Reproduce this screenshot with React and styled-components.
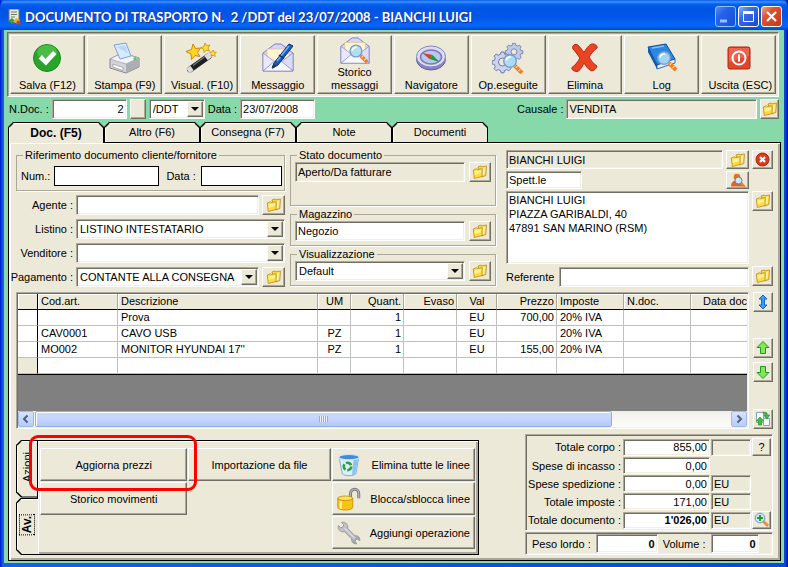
import React from "react";
import styled, { createGlobalStyle, css } from "styled-components";

const face = "#ece9d8";
const green = "#87d9a9";
const shade = "#aca899";
const dark = "#716f64";

const GlobalStyle = createGlobalStyle`
  * {
    box-sizing: border-box;
  }
  body {
    margin: 0;
    background: #0831d9;
    font-family: "Liberation Sans", Arial, sans-serif;
    font-size: 11px;
    line-height: 14px;
    color: #000;
  }
  button, input, select, textarea {
    font: inherit;
    color: inherit;
    margin: 0;
    border-radius: 0;
    outline: none;
  }
  label {
    flex: none;
    white-space: nowrap;
  }
`;

const sunken = css`
  border: 1px solid;
  border-color: ${shade} #fff #fff ${shade};
  box-shadow: inset 1px 1px 0 ${dark}, inset -1px -1px 0 #f1efe2;
`;

const raised = css`
  border: 1px solid;
  border-color: #fff ${dark} ${dark} #fff;
  box-shadow: inset -1px -1px 0 ${shade};
  background: ${face};
`;

/* ---------- window ---------- */

const AppWindow = styled.div`
  display: flex;
  flex-direction: column;
  min-height: 100vh;
  padding: 0 4px 4px;
  background: linear-gradient(90deg, #0019cf, #1660e8 3px, #0b47e0 calc(100% - 3px), #00138c);
`;

const TitleBar = styled.header`
  display: flex;
  align-items: center;
  gap: 2px;
  height: 30px;
  margin: 0 -4px;
  padding: 3px 6px 0 7px;
  border-radius: 7px 7px 0 0;
  background: linear-gradient(
    #0c5ce8 0,
    #3a92ff 2px,
    #0562ee 4px,
    #0054e3 8px,
    #0257ea 18px,
    #0566fb 25px,
    #0460f0 27px,
    #0144c8 30px
  );

  h1 {
    flex: 1;
    margin: 0 0 0 1px;
    font: bold 13px/18px Lato, "Open Sans", sans-serif;
    color: #fff;
    text-shadow: 1px 1px 0 #0f2c8c;
    white-space: pre;
    overflow: hidden;
  }
`;

const WindowButton = styled.button`
  width: 21px;
  height: 21px;
  padding: 0;
  border: 1px solid #fff;
  border-radius: 3px;
  opacity: ${({ $dim }) => ($dim ? 0.6 : 1)};
  background: ${({ $close }) =>
    $close
      ? "linear-gradient(135deg, #f0a08a, #e0512c 35%, #c8371a)"
      : "linear-gradient(135deg, #8fb0fb, #3a6cea 35%, #1c47cc)"};

  svg {
    display: block;
  }
`;

const WindowBody = styled.main`
  display: flex;
  flex: 1;
  flex-direction: column;
  padding: 2px 3px;
  background: ${green};
`;

/* ---------- toolbar ---------- */

const Toolbar = styled.nav`
  display: grid;
  grid-template-columns: repeat(10, 1fr);
  gap: 2px;
  margin-right: 2px;
  padding: 2px;
  border: 1px solid;
  border-color: ${dark} #fff #fff ${dark};
  box-shadow: inset 1px 1px 0 ${shade};
  background: ${face};
`;

const ToolButton = styled.button`
  ${raised}
  display: flex;
  flex-direction: column;
  align-items: center;
  justify-content: space-between;
  height: 59px;
  padding: ${({ $tall }) => ($tall ? "0 0 1px" : "6px 0 1px")};
  line-height: 13px;

  svg {
    flex: none;
  }
  span {
    max-width: 60px;
    margin-top: ${({ $tall }) => ($tall ? "-4px" : "0")};
    white-space: ${({ $tall }) => ($tall ? "normal" : "nowrap")};
  }
`;

/* ---------- controls ---------- */

const Input = styled.input`
  ${sunken}
  flex: ${({ $w }) => ($w ? "none" : "1")};
  min-width: 0;
  width: ${({ $w }) => ($w ? $w + "px" : "100%")};
  height: ${({ $h }) => ($h || 20) + "px"};
  padding: 0 2px;
  background: ${({ readOnly }) => (readOnly ? face : "#fff")};
  text-align: ${({ $right }) => ($right ? "right" : "left")};
  font-weight: ${({ $bold }) => ($bold ? "bold" : "normal")};
`;

const FlatInput = styled(Input)`
  border: 1px solid #000;
  box-shadow: none;
`;

const Area = styled.textarea`
  ${sunken}
  grid-column: 1 / 3;
  height: 73px;
  padding: 1px 2px;
  background: #fff;
  resize: none;
  display: block;
`;

const Combo = styled.div`
  position: relative;
  min-width: 0;
  width: ${({ $w }) => ($w ? $w + "px" : "100%")};

  select {
    ${sunken}
    display: block;
    width: 100%;
    height: 20px;
    padding: 0 18px 0 3px;
    appearance: none;
    background: #fff;
  }
  span {
    ${raised}
    position: absolute;
    top: 2px;
    right: 2px;
    bottom: 2px;
    display: flex;
    align-items: center;
    justify-content: center;
    width: 16px;
    pointer-events: none;
  }
  span::after {
    content: "";
    border: 4px solid transparent;
    border-top-color: #000;
    border-bottom: 0;
  }
`;

const IconButton = styled.button`
  ${raised}
  flex: none;
  display: flex;
  align-items: center;
  justify-content: center;
  width: ${({ $w }) => ($w || 22) + "px"};
  height: ${({ $h }) => ($h || 20) + "px"};
  padding: 0;
`;

const Select = ({ id, label, value, w }) => (
  <Combo $w={w}>
    <select id={id} aria-label={label} defaultValue={value}>
      <option>{value}</option>
    </select>
    <span />
  </Combo>
);

/* ---------- document bar and tabs ---------- */

const DocBar = styled.div`
  display: flex;
  align-items: center;
  gap: 3px;
  height: 25px;
  padding: 0 2px 2px;

  .causale {
    display: flex;
    align-items: center;
    gap: 3px;
    flex: 0 1 262px;
    margin-left: auto;
  }
`;

const chamfer = "polygon(0 100%, 0 5px, 5px 0, calc(100% - 5px) 0, 100% 5px, 100% 100%)";

const TabList = styled.div`
  display: flex;
  align-items: flex-end;
  margin: 0 0 -1px 1px;
  z-index: 1;
`;

const Tab = styled.button`
  position: relative;
  width: 96px;
  height: ${({ $on }) => ($on ? 21 : 20)}px;
  margin-bottom: ${({ $on }) => ($on ? 0 : 1)}px;
  padding: 0;
  border: 0;
  background: #000;
  clip-path: ${chamfer};
  font-weight: ${({ $on }) => ($on ? "bold" : "normal")};
  font-size: ${({ $on }) => ($on ? 12 : 11)}px;

  &::before {
    content: "";
    position: absolute;
    inset: 1px 1px 0;
    background: ${face};
    clip-path: ${chamfer};
    box-shadow: inset 1px 1px 0 #fff;
  }
  span {
    position: relative;
  }
`;

const Panel = styled.section`
  flex: 1;
  display: flex;
  flex-direction: column;
  margin: 0 0 0 1px;
  padding: 5px 7px 4px;
  border: 1px solid #000;
  background: ${face};
  box-shadow: inset 2px 1px 0 #fff, inset -2px -2px 0 ${shade};
`;

/* ---------- form ---------- */

const Form = styled.form`
  display: grid;
  grid-template-columns: 269fr 206fr 272fr;
  gap: 5px;
`;

const Group = styled.fieldset`
  min-width: 0;
  height: ${({ $h }) => $h + "px"};
  margin: 0;
  padding: 0 4px;
  border: 1px solid ${shade};
  box-shadow: 1px 1px 0 #fff;

  legend {
    margin-left: 2px;
    padding: 0 2px;
    background: ${face};
    line-height: 14px;
    font-size: 11px;
  }
`;

const Line = styled.div`
  display: flex;
  align-items: center;
  gap: ${({ $gap }) => $gap ?? 4}px;
  padding-top: ${({ $top }) => $top || 0}px;
`;

const Column = styled.div`
  display: flex;
  flex-direction: column;
  gap: ${({ $gap }) => $gap}px;
  min-width: 0;
`;

const FieldRow = styled.div`
  display: grid;
  grid-template-columns: 57px minmax(0, 1fr) ${({ $button }) => ($button ? "23px" : "")};
  gap: 3px;
  align-items: center;

  label {
    justify-self: end;
  }
`;

const Recipient = styled.div`
  display: grid;
  grid-template-columns: minmax(0, 1fr) 23px 21px;
  align-content: start;
  gap: 2px 3px;
  padding: 2px 0 0 5px;

  .referente {
    grid-column: 1 / 3;
  }
`;

/* ---------- lines grid ---------- */

const LinesArea = styled.div`
  display: flex;
  gap: 4px;
  margin-top: 5px;
`;

const GridFrame = styled.div`
  ${sunken}
  flex: 1;
  min-width: 0;
  padding: 1px;
  overflow: hidden;
`;

const GridView = styled.div`
  height: 117px;
  overflow: hidden;
  background: #808080;
`;

const Lines = styled.table`
  table-layout: fixed;
  width: 100%;
  border-collapse: separate;
  border-spacing: 0;
  border-bottom: 1px solid #000;

  th,
  td {
    height: 16px;
    padding: 0 2px 0 3px;
    border-right: 1px solid #c0c0c0;
    border-bottom: 1px solid #c0c0c0;
    background: #fff;
    font-weight: normal;
    line-height: 15px;
    white-space: nowrap;
    overflow: hidden;
    text-align: left;
  }
  tr > :first-child {
    border-right-color: #000;
  }
  tr > :last-child {
    padding-right: 0;
    border-right: 0;
  }
  thead th {
    border-bottom-color: #000;
    border-right-color: ${shade};
    background: ${face};
    box-shadow: inset 1px 1px 0 #fff;
  }
  tbody tr:last-child > :first-child {
    background: ${face};
  }
  .c {
    text-align: center;
  }
  .r {
    text-align: right;
  }
`;

const ScrollBar = styled.div`
  display: flex;
  height: 16px;
  background: linear-gradient(#f0efea, #fdfdfa);

  button {
    flex: none;
    width: 16px;
    padding: 0;
    border: 1px solid #9db8f0;
    border-radius: 2px;
    background: linear-gradient(#d7e3fe, #b8ccf8);
  }
  button svg {
    display: block;
  }
  .track {
    flex: 1;
    padding: 0 1px;
  }
`;

const Thumb = styled.div`
  width: 83%;
  height: 16px;
  border: 1px solid #8eaeea;
  border-radius: 2px;
  background: linear-gradient(#cadafd, #c3d3fd 60%, #b3c7f6);
  box-shadow: inset 1px 1px 0 #fff;
  display: flex;
  align-items: center;
  justify-content: center;

  i {
    width: 9px;
    height: 6px;
    background: repeating-linear-gradient(90deg, #8cacf0 0 1px, #eef4fe 1px 2px);
  }
`;

const SideButtons = styled.div`
  display: flex;
  flex-direction: column;

  button:nth-child(2) {
    margin-top: 26px;
  }
  button:nth-child(3) {
    margin-top: 4px;
  }
  button:nth-child(4) {
    margin-top: auto;
  }
`;

/* ---------- footer ---------- */

const Footer = styled.div`
  display: flex;
  justify-content: space-between;
  align-items: flex-start;
  margin-top: 5px;
`;

const Actions = styled.section`
  display: flex;
  flex: 0 1 463px;
  margin-top: 6px;
`;

const sideChamfer = "polygon(100% 0, 5px 0, 0 5px, 0 calc(100% - 5px), 5px 100%, 100% 100%)";

const SideTabs = styled.div`
  display: flex;
  flex-direction: column;
  width: 22px;
  margin-right: -1px;
`;

const SideTab = styled.button`
  position: relative;
  z-index: ${({ $on }) => ($on ? 1 : 0)};
  flex: 1;
  width: ${({ $on }) => ($on ? 22 : 21)}px;
  padding: 0;
  border: 0;
  background: #000;
  clip-path: ${sideChamfer};
  font-weight: ${({ $on }) => ($on ? "bold" : "normal")};
  font-size: ${({ $on }) => ($on ? 12 : 11)}px;

  &::before {
    content: "";
    position: absolute;
    inset: 1px 0 1px 1px;
    background: ${face};
    clip-path: ${sideChamfer};
    box-shadow: inset 1px 1px 0 #fff;
  }
  span {
    position: relative;
    display: inline-block;
    writing-mode: vertical-rl;
    transform: rotate(180deg);
    padding: ${({ $on }) => ($on ? "1px 0" : "0")};
    border: ${({ $on }) => ($on ? "1px dotted #000" : "0")};
  }
`;

const ActionPanel = styled.div`
  flex: 1;
  display: grid;
  grid-template-columns: 147fr 142fr 143fr;
  gap: 1px;
  height: 115px;
  padding: 7px 3px 0 2px;
  border: 1px solid #000;
  box-shadow: inset 1px 1px 0 #fff, inset -2px -2px 0 ${shade};
`;

const ActionButton = styled.button`
  ${raised}
  display: flex;
  align-items: center;
  width: 100%;
  height: 33px;
  padding: 0 4px;
  white-space: nowrap;

  svg {
    flex: none;
  }
  span {
    flex: 1;
    text-align: ${({ $end }) => ($end ? "right" : "center")};
  }
`;

const Marked = styled.div`
  position: relative;

  &::after {
    content: "";
    position: absolute;
    inset: -13px -10px -10px -11px;
    z-index: 2;
    border: 3px solid #f00;
    border-radius: 9px;
    pointer-events: none;
  }
`;

const Summary = styled.aside`
  flex: none;
  width: 248px;
`;

const Totals = styled.div`
  display: grid;
  grid-template-columns: 96px 87px 40px 19px;
  gap: 1px;
  align-items: center;
  height: 97px;
  padding: 3px 0 2px;
  border: 1px solid;
  border-color: ${shade} #fff #fff ${shade};
  box-shadow: inset 1px 1px 0 ${dark};

  label {
    justify-self: end;
    padding-right: 1px;
  }
`;

const Weights = styled.div`
  ${sunken}
  display: flex;
  align-items: center;
  gap: 5px;
  height: 23px;
  margin-top: 1px;
  padding: 0 6px;
`;

/* ---------- icons ---------- */

const Folder = () => (
  <svg width="16" height="16" viewBox="0 0 16 16">
    <path d="M6 3l3-1 1 .8 4.500-.8-.7 9.500-4 1.500z" fill="#fbd94a" stroke="#b98a20" strokeWidth=".8" />
    <path d="M8.500 4.500l4.800-.9-.6 7-2.700 1z" fill="#fff29a" />
    <path d="M1.300 6l3-1.200L6 5.500 10.300 4.500 10 12.500 2.300 14.500z" fill="#ffdc3c" stroke="#b98a20" strokeWidth=".8" />
    <path d="M2.500 7.500l6.600-1.500-.2 3-6 2z" fill="#fff29a" />
  </svg>
);

const FolderButton = ({ w, h, label }) => (
  <IconButton type="button" $w={w} $h={h} aria-label={label}>
    <Folder />
  </IconButton>
);

const Glass = ({ x = 0, y = 0 }) => (
  <g transform={`translate(${x} ${y})`}>
    <path d="M12 12l7 7" stroke="#f57c1f" strokeWidth="4" />
    <path d="M13 14l1.500-2M15.500 17l2-2" stroke="#fde0b8" strokeWidth="1.200" />
    <circle cx="7" cy="7" r="6.300" fill="#a9ddf8" fillOpacity=".92" stroke="#7d9cc4" strokeWidth="1.400" />
    <path d="M3 6.500C3.500 4 5.500 2.800 8 3" stroke="#fff" strokeWidth="1.600" fill="none" />
  </g>
);

const Envelope = () => (
  <>
    <path d="M1 11 13 2h6l12 9v18H1z" fill="#d5d5f6" stroke="#7e7ec2" />
    <path d="M5 7h22v14H5z" fill="#fff3d0" stroke="#d8c492" strokeWidth=".7" />
    <path d="M1 11l12 9-12 9z" fill="#e9e9fd" stroke="#8e8ecd" strokeWidth=".8" />
    <path d="M31 11l-12 9 12 9z" fill="#dcdcf8" stroke="#8e8ecd" strokeWidth=".8" />
    <path d="M1 29l13-11h4l13 11z" fill="#f7f7ff" stroke="#8e8ecd" strokeWidth=".8" />
  </>
);

const gearPath =
  "M-1.500-9h3l.6 2.300 2.200.9 2-1.200 2.100 2.100-1.200 2 .9 2.200L10.400-.1v3l-2.300.6-.9 2.200 1.200 2-2.100 2.100-2-1.200-2.200.9-.6 2.300h-3l-.6-2.300-2.200-.9-2 1.200-2.100-2.100 1.200-2-.9-2.200-2.300-.6v-3l2.300-.6.9-2.200-1.200-2 2.100-2.100 2 1.200 2.200-.9z";

const ICONS = {
  save: (
    <>
      <circle cx="16" cy="16" r="13.500" fill="#2aa52c" stroke="#178a1c" />
      <ellipse cx="16" cy="10" rx="10" ry="7" fill="#62ca5a" opacity=".6" />
      <path d="M7.500 16.500l3.500-3.500 3.500 4L22 9l3.500 3L15 23.500z" fill="#fff" />
    </>
  ),
  print: (
    <>
      <path d="M2 17l12-6 17 5v9l-13 6L2 26z" fill="#d3d3d9" stroke="#85858f" />
      <path d="M2 17l12-6 17 5-13 6z" fill="#f4f4f6" stroke="#9c9ca6" strokeWidth=".7" />
      <path d="M6 3l12-2 5 13-11 3z" fill="#d8eaff" stroke="#7ca3d8" />
      <path d="M9 5l8-1.500 3 8" fill="#a8cdf8" opacity=".7" />
      <path d="M18 22l13-6v9l-13 6z" fill="#acacb5" />
      <path d="M5 22l10 3.500v3L5 25z" fill="#fff" stroke="#888" strokeWidth=".6" />
      <circle cx="27" cy="16.500" r="1.600" fill="#4cd14c" />
    </>
  ),
  wand: (
    <>
      <path d="M5 27.500 24 14" stroke="#1d1d22" strokeWidth="6" strokeLinecap="round" />
      <path d="M8 23.500l12-9" stroke="#75757f" strokeWidth="1.300" />
      <path d="M3 29l4-2.900M21 16l6-4.500" stroke="#dcdce2" strokeWidth="5.500" />
      <path d="M8 2l2.500 4.500 5-.5-3 4.500 2.500 4-5-1-3.500 4-.5-5.500L1 9.500l5.500-2z" fill="#ffd426" stroke="#c98b00" />
      <path d="M20 1l1.500 2.500 3.500-.5-2 3 1.500 3-3.300-.8L19 10.500l-.3-3.300-3-1.500 3.200-1.200z" fill="#ffdc3a" stroke="#c98b00" strokeWidth=".8" />
      <path d="M28 8l1 2 2.500.3-1.800 1.700.5 2.500-2.200-1.200-2 1 .4-2.300-1.800-1.700 2.400-.4z" fill="#ffdc3a" stroke="#c98b00" strokeWidth=".7" />
    </>
  ),
  message: (
    <>
      <Envelope />
      <path d="M10 26l2-5L27 2l4 2-15 19z" fill="#1660c0" stroke="#0a2f74" />
      <path d="M15 19 27 4" stroke="#74b2f5" strokeWidth="1.400" />
      <path d="M10 27l1.800-5 3.200 2z" fill="#333" />
      <path d="M17 13l5 3.500" stroke="#0b2c6c" strokeWidth="1.500" />
    </>
  ),
  history: (
    <>
      <Envelope />
      <Glass x={10} y={9} />
    </>
  ),
  compass: (
    <>
      <ellipse cx="16" cy="17.500" rx="14.500" ry="10.500" fill="#8583c0" stroke="#67659f" />
      <ellipse cx="16" cy="14.500" rx="14.500" ry="10.500" fill="#dcdcf4" stroke="#8886bf" />
      <ellipse cx="16" cy="15" rx="10.500" ry="7" fill="#b6c9ef" stroke="#7c7ab6" strokeWidth="1.500" />
      <path d="M7.500 11l10 2-3 4z" fill="#e23b1c" />
      <path d="M24.500 20l-10-3 3-4z" fill="#1e9a3a" />
    </>
  ),
  gears: (
    <>
      <g transform="translate(22 9) scale(.85)">
        <path d={gearPath} fill="#c2c9e6" stroke="#6f7bb0" />
        <circle cy="1" r="3.500" fill={face} stroke="#6f7bb0" />
      </g>
      <g transform="translate(10.500 19)">
        <path d={gearPath} fill="#ccd3ee" stroke="#6f7bb0" />
        <circle cy="1" r="4" fill={face} stroke="#6f7bb0" />
      </g>
      <Glass x={11} y={12} />
    </>
  ),
  cross: (
    <path
      d="M6 2.500c3-1 5 3 9 8 3-5 6-9 9-8.500 2 0 5 2 4 4-3 2-6 6-8 9 3 5 5 7 8 9-1 4-5 6-7 4-2-1-4-4-6-7-2 4-4 8-7 8.500-3 0-6-2-5-4 4-3 6-6 8-9.500C8 12 6 9 4 7c-1-2 0-4 2-4.500z"
      fill="#ea4423"
      stroke="#b52410"
    />
  ),
  log: (
    <>
      <path d="M2 5l18-3 9 15-18 6z" fill="#2b86e0" stroke="#0e4a9c" />
      <path d="M2 5v5l9 17v-4z" fill="#0f56b0" />
      <path d="M11 23v4l18-6v-4z" fill="#e8eefa" stroke="#0e4a9c" strokeWidth=".8" />
      <path d="M6 6l12-2" stroke="#7fc0ff" strokeWidth="1.500" />
      <Glass x={11} y={9} />
    </>
  ),
  exit: (
    <>
      <rect x="5" y="5" width="22" height="22" rx="2" fill="#e2452a" stroke="#a62813" />
      <path d="M6 6h20v8L6 20z" fill="#f08069" opacity=".55" />
      <circle cx="16" cy="16" r="6.500" fill="none" stroke="#fff" strokeWidth="2" />
      <path d="M16 12.500v7" stroke="#fff" strokeWidth="2" />
    </>
  ),
  bin: (
    <>
      <path d="M3 6l4 22c4 3 14 3 18 0l4-22z" fill="#dcedfc" stroke="#5b98dc" />
      <path d="M22 8h6l-4 20-4 1.500z" fill="#8fc0f2" />
      <ellipse cx="16" cy="5.500" rx="13.500" ry="3.500" fill="#3f8ae0" stroke="#cfe4fa" strokeWidth="1.500" />
      <circle cx="14" cy="18" r="5" fill="none" stroke="#2ca23a" strokeWidth="3.500" strokeDasharray="8 2.400" />
    </>
  ),
  lock: (
    <>
      <path d="M18 14V9c0-8 11-8 11 0v6" fill="none" stroke="#77777c" strokeWidth="4" />
      <path d="M18 14V9c0-8 11-8 11 0v6" fill="none" stroke="#b8b8bd" strokeWidth="1.500" />
      <path d="M1 15v12c0 5 20 5 20 0V15z" fill="#f6c414" stroke="#b98700" />
      <path d="M5 19v10" stroke="#fff09a" strokeWidth="3" />
      <ellipse cx="11" cy="15" rx="10" ry="3" fill="#fbe062" stroke="#b98700" />
    </>
  ),
  wrench: (
    <>
      <path d="M9 9l15 15" stroke="#8b8b92" strokeWidth="7" />
      <circle cx="8" cy="8" r="6.500" fill="#c2c2c8" stroke="#8b8b92" />
      <circle cx="25" cy="25" r="5.500" fill="#a9a9b0" stroke="#8b8b92" />
      <path d="M9 9l15 15" stroke="#bcbcc3" strokeWidth="5.500" />
      <path d="M10 9.500l13 13" stroke="#e2e2e6" strokeWidth="1.500" />
      <path d="M0 4 4 0l5 5-1 3-3 1zM32 28l-4 4-4-5 1-2 2-1z" fill={face} />
      <path d="M2 6l3 3 3-1 1-3-3-3M30 26l-3-2-2 1-1 2 2 3" fill="none" stroke="#8b8b92" />
    </>
  ),
};

const Icon = ({ name, size = 32 }) => (
  <svg width={size} height={size} viewBox="0 0 32 32">
    {ICONS[name]}
  </svg>
);

const ArrowIcon = ({ d, fill, stroke }) => (
  <svg width="16" height="16" viewBox="0 0 16 16">
    <path d={d} fill={fill} stroke={stroke} />
  </svg>
);

const tools = [
  { icon: "save", label: "Salva (F12)" },
  { icon: "print", label: "Stampa (F9)" },
  { icon: "wand", label: "Visual. (F10)" },
  { icon: "message", label: "Messaggio" },
  { icon: "history", label: "Storico messaggi", tall: true },
  { icon: "compass", label: "Navigatore" },
  { icon: "gears", label: "Op.eseguite" },
  { icon: "cross", label: "Elimina" },
  { icon: "log", label: "Log" },
  { icon: "exit", label: "Uscita (ESC)" },
];

const tabs = ["Doc. (F5)", "Altro (F6)", "Consegna (F7)", "Note", "Documenti"];

const columns = [
  { label: "", width: 20 },
  { label: "Cod.art.", width: 80 },
  { label: "Descrizione", width: 200 },
  { label: "UM", width: 33, align: "c" },
  { label: "Quant.", width: 53, align: "r" },
  { label: "Evaso", width: 53, align: "r" },
  { label: "Val", width: 40, align: "c" },
  { label: "Prezzo", width: 60, align: "r" },
  { label: "Imposte", width: 67 },
  { label: "N.doc.", width: 67 },
  { label: "Data doc", align: "r" },
];

const rows = [
  ["", "", "Prova", "", "1", "", "EU", "700,00", "20% IVA", "", ""],
  ["", "CAV0001", "CAVO USB", "PZ", "1", "", "EU", "", "20% IVA", "", ""],
  ["", "MO002", "MONITOR HYUNDAI 17''", "PZ", "1", "", "EU", "155,00", "20% IVA", "", ""],
  ["", "", "", "", "", "", "", "", "", "", ""],
];

const totals = [
  { id: "corpo", label: "Totale corpo :", value: "855,00", unit: "", extra: "help" },
  { id: "incasso", label: "Spese di incasso :", value: "0,00" },
  { id: "spedizione", label: "Spese spedizione :", value: "0,00", unit: "EU" },
  { id: "imposte", label: "Totale imposte :", value: "171,00", unit: "EU" },
  { id: "documento", label: "Totale documento :", value: "1'026,00", unit: "EU", bold: true, extra: "zoom" },
];

const App = () => (
  <>
    <GlobalStyle />
    <AppWindow>
      <TitleBar>
        <svg width="15" height="16" viewBox="0 0 15 16">
          <path d="M2 0h10v12H2z" fill="#e9e9e2" stroke="#77776c" />
          <path d="M4 3h6M4 5.500h6M4 8h4" stroke="#6d7a6a" strokeWidth="1.200" />
          <path d="M1 12l4-3 3 3-3 3z" fill="#3b9b3b" />
          <path d="M6 13l3-4 4 2-2 4z" fill="#e8b020" />
          <circle cx="11.500" cy="13.500" r="2" fill="#d6401c" />
        </svg>
        <h1>{"DOCUMENTO DI TRASPORTO N.  2 /DDT del 23/07/2008 - BIANCHI LUIGI"}</h1>
        <WindowButton $dim aria-label="Riduci">
          <svg width="19" height="19" viewBox="0 0 19 19">
            <path d="M4 12.500h7v3H4z" fill="#fff" />
          </svg>
        </WindowButton>
        <WindowButton aria-label="Ingrandisci">
          <svg width="19" height="19" viewBox="0 0 19 19">
            <path d="M4.500 5h10v9.500h-10z" fill="none" stroke="#fff" />
            <path d="M4 4h11v3H4z" fill="#fff" />
          </svg>
        </WindowButton>
        <WindowButton $close aria-label="Chiudi">
          <svg width="19" height="19" viewBox="0 0 19 19">
            <path d="M5 5l9 9M14 5l-9 9" stroke="#fff" strokeWidth="2.200" />
          </svg>
        </WindowButton>
      </TitleBar>

      <WindowBody>
        <Toolbar>
          {tools.map(({ icon, label, tall }) => (
            <ToolButton key={icon} $tall={tall}>
              <Icon name={icon} size={tall ? 30 : 32} />
              <span>{label}</span>
            </ToolButton>
          ))}
        </Toolbar>

        <DocBar>
          <label htmlFor="ndoc">N.Doc. :</label>
          <Input id="ndoc" $w={75} $right defaultValue="2" />
          <IconButton $w={16} aria-label="Numero successivo" />
          <Select label="Tipo documento" value="/DDT" w={56} />
          <label htmlFor="data">Data :</label>
          <Input id="data" $w={75} defaultValue="23/07/2008" />
          <div className="causale">
            <label htmlFor="causale">Causale :</label>
            <Input id="causale" readOnly value="VENDITA" />
            <FolderButton w={19} label="Scegli causale" />
          </div>
        </DocBar>

        <TabList role="tablist">
          {tabs.map((tab, i) => (
            <Tab key={tab} role="tab" aria-selected={i === 0} $on={i === 0}>
              <span>{tab}</span>
            </Tab>
          ))}
        </TabList>

        <Panel>
          <Form>
            <Column $gap={4}>
              <Group $h={43}>
                <legend>Riferimento documento cliente/fornitore</legend>
                <Line $top={4}>
                  <label htmlFor="rif-num">Num.:</label>
                  <FlatInput id="rif-num" $w={105} />
                  <Line $gap={5}>
                    <label htmlFor="rif-data">&nbsp;Data :</label>
                    <FlatInput id="rif-data" $w={81} />
                  </Line>
                </Line>
              </Group>
              <FieldRow $button>
                <label htmlFor="agente">Agente :</label>
                <Input id="agente" />
                <FolderButton w={23} label="Scegli agente" />
              </FieldRow>
              <FieldRow>
                <label htmlFor="listino">Listino :</label>
                <Select id="listino" value="LISTINO INTESTATARIO" />
              </FieldRow>
              <FieldRow>
                <label htmlFor="venditore">Venditore :</label>
                <Select id="venditore" value="" />
              </FieldRow>
              <FieldRow $button>
                <label htmlFor="pagamento">Pagamento :</label>
                <Select id="pagamento" value="CONTANTE ALLA CONSEGNA" />
                <FolderButton w={23} label="Scegli pagamento" />
              </FieldRow>
            </Column>

            <Column $gap={1}>
              <Group $h={58}>
                <legend>Stato documento</legend>
                <Line>
                  <Input readOnly aria-label="Stato documento" value="Aperto/Da fatturare" />
                  <FolderButton label="Scegli stato" />
                </Line>
              </Group>
              <Group $h={39}>
                <legend>Magazzino</legend>
                <Line>
                  <Input aria-label="Magazzino" defaultValue="Negozio" />
                  <FolderButton label="Scegli magazzino" />
                </Line>
              </Group>
              <Group $h={39}>
                <legend>Visualizzazione</legend>
                <Line>
                  <Select label="Visualizzazione" value="Default" />
                  <FolderButton label="Scegli visualizzazione" />
                </Line>
              </Group>
            </Column>

            <Recipient>
              <Input $h={19} readOnly aria-label="Intestatario" value="BIANCHI LUIGI" />
              <FolderButton w={23} h={19} label="Scegli intestatario" />
              <IconButton type="button" $w={21} $h={19} aria-label="Rimuovi intestatario">
                <svg width="15" height="15" viewBox="0 0 15 15">
                  <circle cx="7.500" cy="7.500" r="6.500" fill="#e2371f" stroke="#b01e0c" />
                  <path d="M5 5l5 5M10 5l-5 5" stroke="#fff" strokeWidth="2.200" />
                </svg>
              </IconButton>
              <Input $w={76} $h={18} aria-label="Titolo" defaultValue="Spett.le" />
              <IconButton type="button" $w={23} $h={18} aria-label="Cerca persona">
                <svg width="16" height="15" viewBox="0 0 16 15">
                  <circle cx="7" cy="4" r="3.300" fill="#e8731c" />
                  <path d="M1 13.500c0-5 3-6 6-6s7 2 7 6z" fill="#e0632c" />
                  <path d="M11 10l4 4" stroke="#f08418" strokeWidth="2.200" />
                  <circle cx="8.500" cy="7.500" r="3.500" fill="#c6eafc" stroke="#5d7fae" />
                </svg>
              </IconButton>
              <i />
              <Area
                aria-label="Indirizzo"
                defaultValue={"BIANCHI LUIGI\nPIAZZA GARIBALDI, 40\n47891 SAN MARINO (RSM)"}
              />
              <FolderButton w={21} label="Scegli indirizzo" />
              <Line className="referente" $top={1} $gap={5}>
                <label htmlFor="referente">Referente</label>
                <Input id="referente" />
              </Line>
              <FolderButton w={21} label="Scegli referente" />
            </Recipient>
          </Form>

          <LinesArea>
            <GridFrame>
              <GridView>
                <Lines>
                  <colgroup>
                    {columns.map((col) => (
                      <col key={col.label} width={col.width} />
                    ))}
                  </colgroup>
                  <thead>
                    <tr>
                      {columns.map((col) => (
                        <th key={col.label} className={col.align}>
                          {col.label}
                        </th>
                      ))}
                    </tr>
                  </thead>
                  <tbody>
                    {rows.map((row, r) => (
                      <tr key={r}>
                        {row.map((cell, c) => (
                          <td key={c} className={columns[c].align}>
                            {cell}
                          </td>
                        ))}
                      </tr>
                    ))}
                  </tbody>
                </Lines>
              </GridView>
              <ScrollBar>
                <button aria-label="Scorri a sinistra">
                  <svg width="14" height="14" viewBox="0 0 14 14">
                    <path d="M8.500 3.500 5 7l3.500 3.500" fill="none" stroke="#4d6185" strokeWidth="2" />
                  </svg>
                </button>
                <div className="track">
                  <Thumb>
                    <i />
                  </Thumb>
                </div>
                <button aria-label="Scorri a destra">
                  <svg width="14" height="14" viewBox="0 0 14 14">
                    <path d="M5.500 3.500 9 7l-3.500 3.500" fill="none" stroke="#4d6185" strokeWidth="2" />
                  </svg>
                </button>
              </ScrollBar>
            </GridFrame>
            <SideButtons>
              <IconButton $w={20} aria-label="Sposta">
                <ArrowIcon d="M8 1l4 4H9.500v6H12l-4 4-4-4h2.500V5H4z" fill="#3a9df5" stroke="#1c66bd" />
              </IconButton>
              <IconButton $w={20} aria-label="Sposta su">
                <ArrowIcon d="M8 1.500l6 6h-3.500v6h-5v-6H2z" fill="#7fe85a" stroke="#249a1c" />
              </IconButton>
              <IconButton $w={20} aria-label="Sposta giù">
                <ArrowIcon d="M8 14.500l6-6h-3.500v-6h-5v6H2z" fill="#7fe85a" stroke="#249a1c" />
              </IconButton>
              <IconButton $w={20} aria-label="Aggiorna righe">
                <svg width="16" height="16" viewBox="0 0 16 16">
                  <path d="M1.500 1.500h7v10h-7zM8.500 7.500h6v7h-6z" fill="#f4f9ff" stroke="#86a3c4" />
                  <path d="M5 6l3.500 4H6.500v4h-3v-4h-2z" fill="#3fc33a" stroke="#1c8f1c" strokeWidth=".7" />
                  <path d="M8 1l4 1v2h2.500L12 8 9 4.500h1.500z" fill="#3fc33a" stroke="#1c8f1c" strokeWidth=".7" />
                </svg>
              </IconButton>
            </SideButtons>
          </LinesArea>

          <Footer>
            <Actions>
              <SideTabs role="tablist">
                <SideTab role="tab" aria-selected={false}>
                  <span>Azioni</span>
                </SideTab>
                <SideTab role="tab" aria-selected $on>
                  <span>Av.</span>
                </SideTab>
              </SideTabs>
              <ActionPanel>
                <Column $gap={1}>
                  <Marked>
                    <ActionButton>
                      <span>Aggiorna prezzi</span>
                    </ActionButton>
                  </Marked>
                  <ActionButton>
                    <span>Storico movimenti</span>
                  </ActionButton>
                </Column>
                <Column $gap={1}>
                  <ActionButton>
                    <span>Importazione da file</span>
                  </ActionButton>
                </Column>
                <Column $gap={1}>
                  <ActionButton $end>
                    <Icon name="bin" size={24} />
                    <span>Elimina tutte le linee</span>
                  </ActionButton>
                  <ActionButton $end>
                    <Icon name="lock" size={24} />
                    <span>Blocca/sblocca linee</span>
                  </ActionButton>
                  <ActionButton $end>
                    <Icon name="wrench" size={24} />
                    <span>Aggiungi operazione</span>
                  </ActionButton>
                </Column>
              </ActionPanel>
            </Actions>

            <Summary>
              <Totals>
                {totals.map(({ id, label, value, unit, bold, extra }) => (
                  <React.Fragment key={id}>
                    <label htmlFor={id}>{label}</label>
                    <Input id={id} $h={17} $right $bold={bold} defaultValue={value} />
                    {unit === undefined ? (
                      <i />
                    ) : (
                      <Input $h={17} readOnly aria-label="Valuta" value={unit} />
                    )}
                    {extra === "help" && (
                      <IconButton $w={19} $h={18} aria-label="Aiuto">
                        ?
                      </IconButton>
                    )}
                    {extra === "zoom" && (
                      <IconButton $w={19} $h={18} aria-label="Dettaglio totali">
                        <svg width="16" height="16" viewBox="0 0 16 16">
                          <path d="M9 9l5 5" stroke="#f08a3c" strokeWidth="3" />
                          <circle cx="6" cy="6" r="4.800" fill="#c9ecfb" stroke="#7596bd" />
                          <path d="M6 3v6M3 6h6" stroke="#1fa01f" strokeWidth="2" />
                        </svg>
                      </IconButton>
                    )}
                    {!extra && <i />}
                  </React.Fragment>
                ))}
              </Totals>
              <Weights>
                <label htmlFor="peso">Peso lordo :</label>
                <Input id="peso" $w={62} $h={19} $right $bold defaultValue="0" />
                <label htmlFor="volume">Volume :</label>
                <Input id="volume" $w={48} $h={19} $right $bold defaultValue="0" />
              </Weights>
            </Summary>
          </Footer>
        </Panel>
      </WindowBody>
    </AppWindow>
  </>
);

export default App;
